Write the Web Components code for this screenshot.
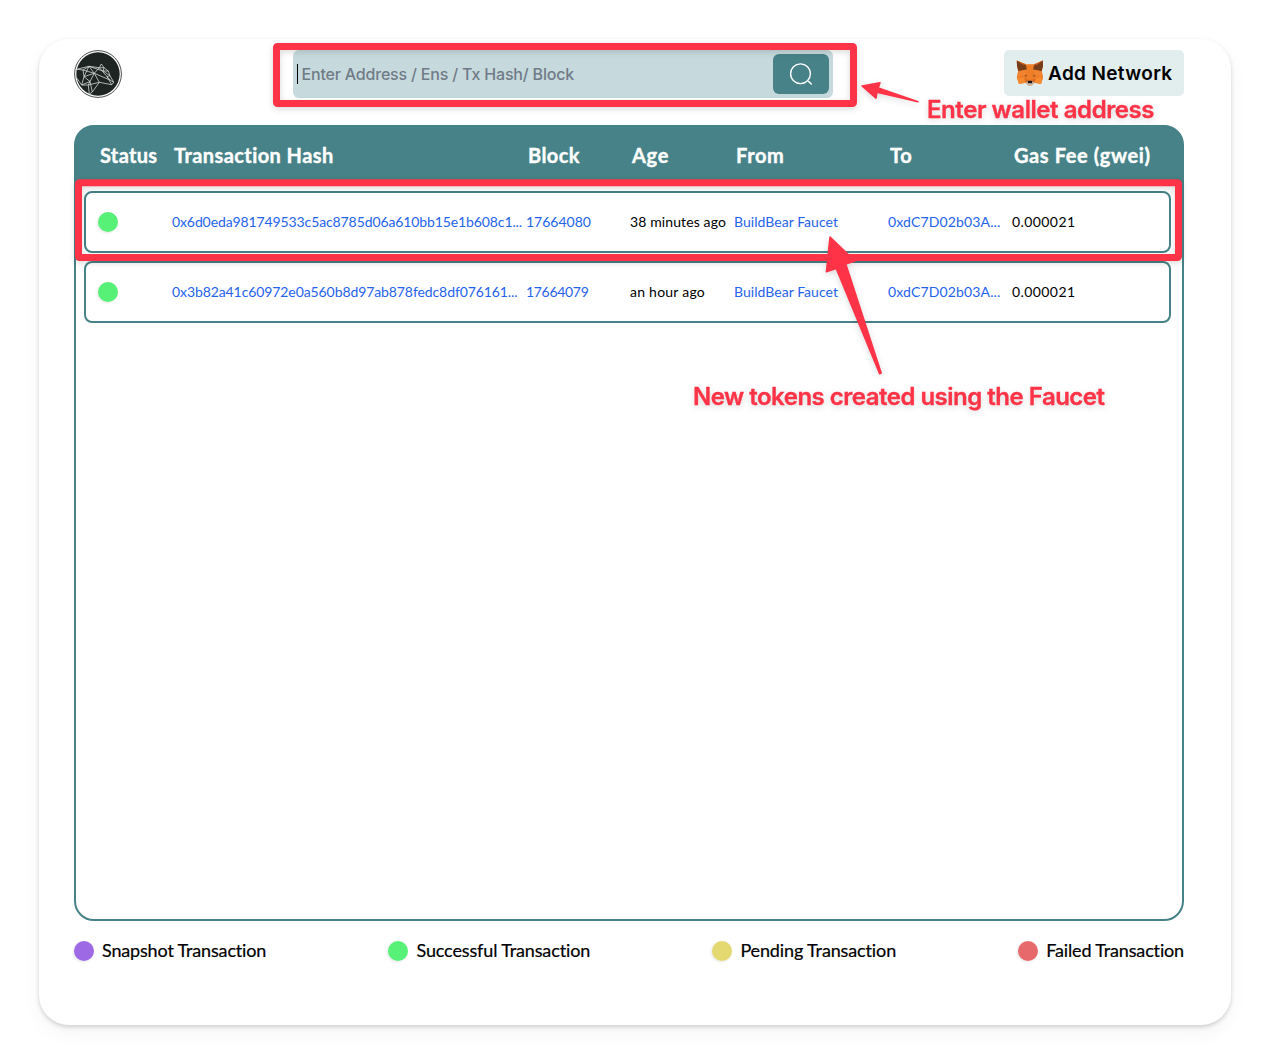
<!DOCTYPE html>
<html lang="en">
<head>
<meta charset="utf-8">
<title>Transactions explorer</title>
<style>
html,body{margin:0;height:1064px;overflow:hidden;background:#fff}
</style>
</head>
<body>
<explorer-page></explorer-page>
<script>
const define = (name, html, setup) => customElements.define(name, class extends HTMLElement {
  constructor() {
    super();
    this.attachShadow({mode: 'open'}).innerHTML = html;
  }
  connectedCallback() { if (setup) setup(this, this.shadowRoot); }
});

// Single-line label whose tracking is adjusted to fill a given width.
define('fit-text', `<style>:host{display:inline-block;white-space:nowrap}span{display:inline-block}</style><span><slot></slot></span>`, (el, root) => {
  const span = root.querySelector('span');
  const count = el.textContent.trim().length;
  const natural = span.getBoundingClientRect().width;
  const want = +el.getAttribute('width');
  if (want && count) span.style.letterSpacing = ((want - natural) / count).toFixed(4) + 'px';
});

define('bear-logo', `<style>:host{display:block;width:48px;height:48px}svg{display:block}</style>
<svg width="48" height="48" viewBox="0 0 48 48" fill="none">
<circle cx="24" cy="24" r="23.4" fill="#fff" stroke="#4b4f4d" stroke-width="1"/>
<circle cx="24" cy="24" r="21.7" fill="#1e2421"/>
<g stroke="#d3d7d5" stroke-width=".8" stroke-linejoin="round">
<path d="M2.7 19.3L15 16.3L25.3 17.7L27.3 14L30 17.7L34.3 21L36 25.7L39.7 32.3L37.7 34.7L25.3 32.3L18.3 42L15.3 44.3L14.3 35L7.7 35L2.7 28"/>
<path d="M2.7 19.3L9 20L15 16.3L20.3 23.3L10 26.7L9 20L20.3 23.3M15 16.3L10 26.7L7.7 35L16 31.5L10 26.7M20.3 23.3L16 31.5L14.3 35L25.3 32.3L20.3 23.3L36 30L25.3 17.7L20.3 23.3M16 31.5L18.3 42"/>
<path d="M25.3 17.7L30 17.7L29 21L34.3 21M29 21L36 25.7L33 26.5L37.7 34.7M36 30L39.7 32.3M15 16.3L29 21"/>
</g></svg>`);

define('search-bar', `<style>
:host{display:flex;box-sizing:border-box;width:540px;height:48px;padding:4px;border-radius:6px;background:#c6dadd;align-items:center;justify-content:space-between}
.field{display:flex;align-items:center;gap:3.5px;font:500 16px/20px Inter,sans-serif;color:#717b88}
.caret{width:1px;height:20px;background:#000}
button{display:flex;align-items:center;justify-content:center;width:56px;height:40px;border:0;border-radius:6px;padding:0;background:#468287}
</style><div class="field"><span class="caret"></span><fit-text width="272.5">Enter Address / Ens / Tx Hash/ Block</fit-text></div>
<button aria-label="Search"><svg width="24" height="24" viewBox="0 0 24 24" fill="none" stroke="#fff" stroke-width="1.35" stroke-linecap="round"><circle cx="11.5" cy="11.7" r="9.9"/><path d="M19.8 19.6L22.3 22" stroke-width="1.5"/></svg></button>`);

define('fox-icon', `<style>:host{display:block}svg{display:block}</style>
<svg width="28" height="26" viewBox="0 0 28 26">
<path d="M.8 .6L10.5 4.3H17.5L26.8 .6L27 6L25.8 11L27 17.5L25 24L18.5 22.8L15.8 25.5H12.2L9.5 22.8L3 24L.8 17.5L2.2 11L1 6Z" fill="#ef7d25"/>
<path d="M.8 .6L9.8 5L11 9.5L2.4 11.3L1 6ZM26.8 .6L18.2 5L17 9.5L25.6 11.3L27 6Z" fill="#773d18"/>
<path d="M.8 .6L9.8 5L6.5 4.6ZM26.8 .6L18.2 5L21.5 4.6Z" fill="#d8681f"/>
<path d="M2.4 11.3L11 9.5L9 15L1 17.5ZM25.6 11.3L17 9.5L19 15L27 17.5Z" fill="#f08330"/>
<path d="M7.8 16L10.6 14.6L11.2 16.8ZM20.2 16L17.4 14.6L16.8 16.8Z" fill="#9a5a35"/>
<path d="M1 17.7H8.5L9.5 22.8L3 24ZM27 17.7H19.5L18.5 22.8L25 24Z" fill="#f58a31"/>
<path d="M8.5 17.7L12 20.5L9.5 22.8ZM19.5 17.7L16 20.5L18.5 22.8Z" fill="#d9661f"/>
<path d="M9.8 22.4L12 21H16L18.2 22.4L15.8 25.5H12.2Z" fill="#c9bdb2"/>
<path d="M11.6 21.6L12.2 20.8H15.8L16.4 21.6L16 23.2H12Z" fill="#1c1718"/>
</svg>`);

define('network-button', `<style>:host{display:flex;box-sizing:border-box;width:180px;height:46px;padding:0 12px;gap:4px;border-radius:5px;background:#e2eded;align-items:center;font:600 19px/24px Inter,sans-serif;color:#000}fit-text{padding-top:2px}</style><fox-icon></fox-icon><fit-text width="124.5">Add Network</fit-text>`);

define('status-dot', `<style>:host{display:block;width:20px;height:20px;border-radius:50%;background:var(--dot);box-shadow:-1px 1px 3px rgba(0,0,0,.1);flex:none}</style>`);

define('tx-row', `<style>
:host{display:grid;box-sizing:border-box;height:62px;border:2px solid #468287;border-radius:8px;padding-left:12px;align-items:center;grid-template-columns:74px 354px 104px 104px 154px 124px 1fr;font:400 14px/20px Lato,sans-serif;color:#000;background:#fff}
a{color:#2563eb}
status-dot{--dot:#57f177}
</style><status-dot></status-dot><a></a><a></a><span></span><a></a><a></a><span></span>`, (el, root) => {
  const put = (node, attr, width) => {
    const label = document.createElement('fit-text');
    label.textContent = el.getAttribute(attr);
    label.setAttribute('width', width);
    node.append(label);
  };
  const [hash, block, age, from, to, gas] = root.querySelectorAll('a,span');
  put(hash, 'hash', el.getAttribute('hash-width'));
  put(block, 'block', el.getAttribute('block-width'));
  put(age, 'age', el.getAttribute('age-width'));
  put(from, 'from', 104);
  put(to, 'to', 112.5);
  put(gas, 'gas', 63.5);
});

define('tx-table', `<style>
:host{display:flex;flex-direction:column;box-sizing:border-box;height:796px;border:2px solid #468287;border-radius:20px;overflow:hidden;background:linear-gradient(#468287 40px,#fff 40px)}
header{display:grid;grid-template-columns:74px 354px 104px 104px 154px 124px 1fr;height:56px;padding:0 0 0 24px;align-items:center;background:#468287;color:#fff;font:700 20px/28px Lato,sans-serif;-webkit-text-stroke:.4px}
.rows{display:flex;flex-direction:column;gap:8px;padding:8px 11px 0 8px}
</style><header><fit-text width="57.5">Status</fit-text><fit-text width="160">Transaction Hash</fit-text><fit-text width="52">Block</fit-text><fit-text width="37">Age</fit-text><fit-text width="48.5">From</fit-text><fit-text width="22.5">To</fit-text><fit-text width="136.5">Gas Fee (gwei)</fit-text></header>
<div class="rows"><slot></slot></div>`);

define('legend-item', `<style>:host{display:flex;align-items:center;gap:8px;font:400 18px/26px Lato,sans-serif;color:#000;-webkit-text-stroke:.2px}::slotted(fit-text){padding-bottom:2px}</style><status-dot></status-dot><slot></slot>`);

// Callout layer drawn over the explorer.
define('callout-layer', `<style>
:host{position:absolute;inset:0;pointer-events:none;filter:drop-shadow(0 2px 3px rgba(0,0,0,.15))}
svg{position:absolute;inset:0}
.note{position:absolute;font:600 24px/30px Inter,sans-serif;color:#ff3347;-webkit-text-stroke:.35px}
</style>
<svg width="1270" height="1064" fill="none" stroke="#ff3347" stroke-linejoin="round">
<rect x="276.5" y="46.5" width="577" height="57" rx="1" stroke-width="7"/>
<rect x="78.5" y="182.7" width="1100" height="74.8" rx="1" stroke-width="7"/>
<g fill="#ff3347" stroke-width="1.5">
<path d="M862 86L880 82.8L878.2 88L918 101.8L877 92.2L876 98.2Z"/>
<path d="M830 237L855 261L845.8 264L881.2 373L879.6 373.8L836.2 268.5L826.4 271.8Z"/>
</g></svg>
<fit-text class="note" style="left:927px;top:95px" width="227">Enter wallet address</fit-text>
<fit-text class="note" style="left:693px;top:382px" width="411.5">New tokens created using the Faucet</fit-text>`);

define('explorer-page', `<style>
:host{display:block;position:relative;box-sizing:border-box;width:1270px;height:1064px;padding:39px 39px 0}
main{display:flex;flex-direction:column;box-sizing:border-box;width:1192px;height:986px;padding:11px 47px 0 35px;border-radius:30px;background:#fff;box-shadow:0 2px 4px rgba(0,0,0,.16),0 8px 20px rgba(0,0,0,.045)}
nav{display:flex;justify-content:space-between;align-items:flex-start;height:75px}
footer{display:flex;justify-content:space-between;align-items:center;height:28px;margin-top:16px}
</style>
<main>
<nav><bear-logo></bear-logo><search-bar></search-bar><network-button></network-button></nav>
<tx-table>
<tx-row hash="0x6d0eda981749533c5ac8785d06a610bb15e1b608c1..." hash-width="350" block="17664080" block-width="65" age="38 minutes ago" age-width="96" from="BuildBear Faucet" to="0xdC7D02b03A..." gas="0.000021"></tx-row>
<tx-row hash="0x3b82a41c60972e0a560b8d97ab878fedc8df076161..." hash-width="345.5" block="17664079" block-width="62.5" age="an hour ago" age-width="75" from="BuildBear Faucet" to="0xdC7D02b03A..." gas="0.000021"></tx-row>
</tx-table>
<footer>
<legend-item style="--dot:#9d69e5"><fit-text width="164.5">Snapshot Transaction</fit-text></legend-item>
<legend-item style="--dot:#57f177"><fit-text width="174">Successful Transaction</fit-text></legend-item>
<legend-item style="--dot:#e4d970"><fit-text width="156">Pending Transaction</fit-text></legend-item>
<legend-item style="--dot:#e8696c"><fit-text width="138">Failed Transaction</fit-text></legend-item>
</footer>
</main>
<callout-layer></callout-layer>`);
</script>
</body>
</html>
